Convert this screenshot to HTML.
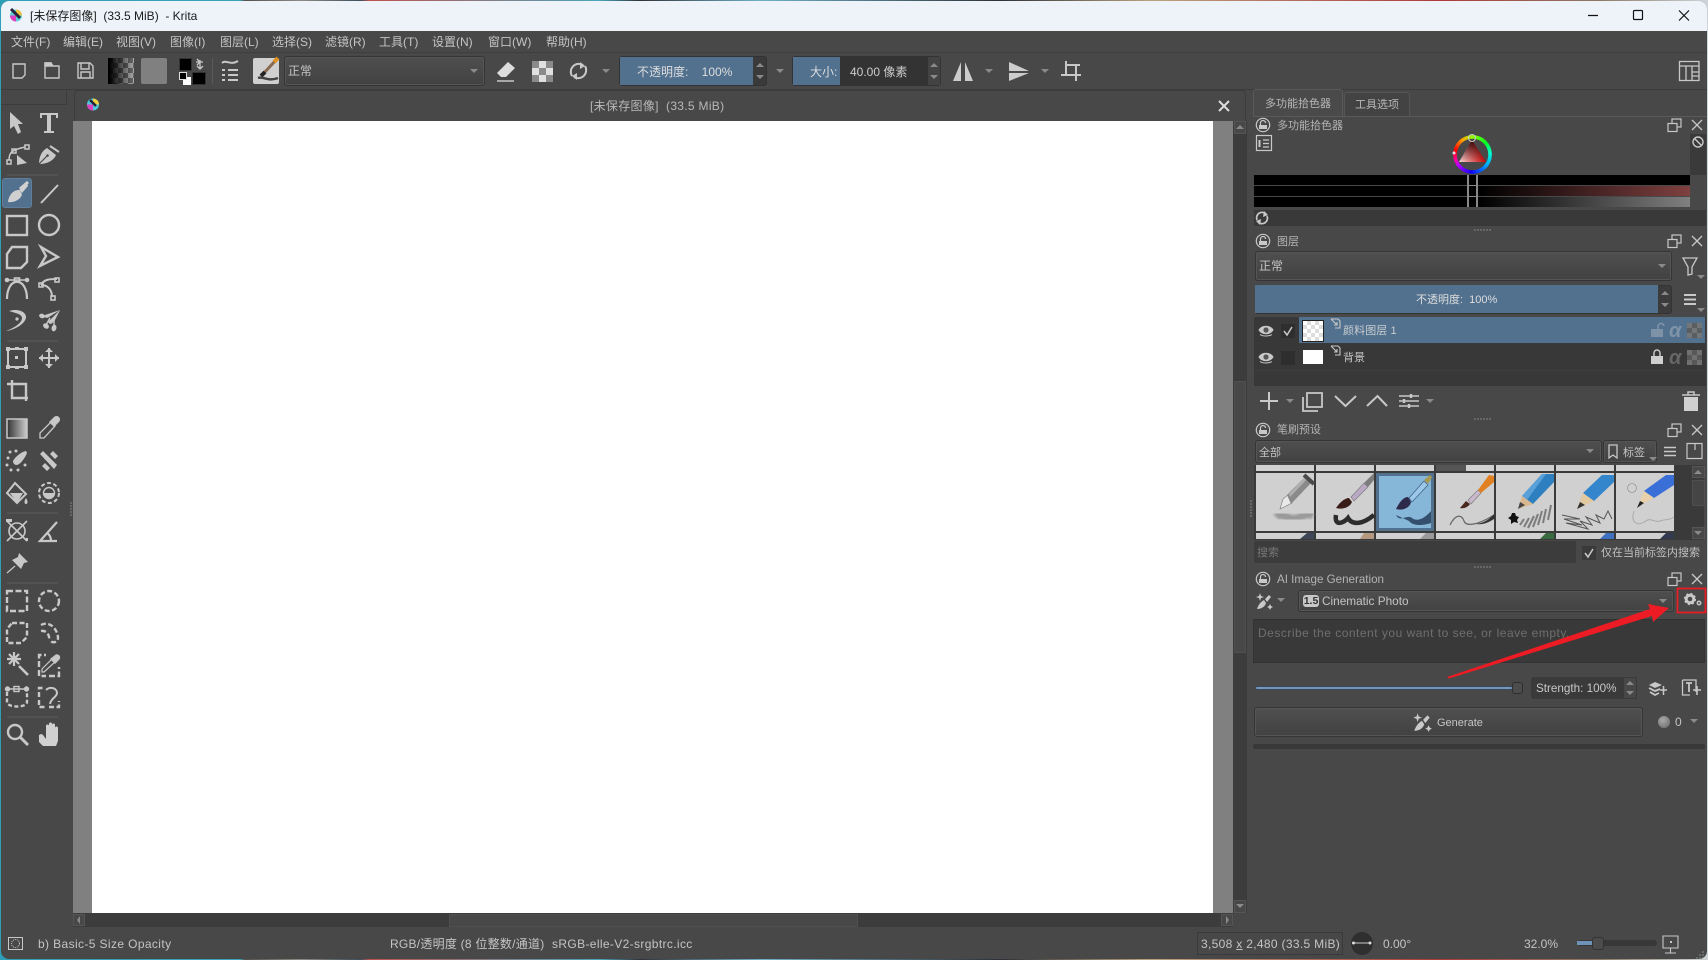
<!DOCTYPE html>
<html lang="zh-CN"><head><meta charset="utf-8"><title>Krita</title>
<style>
html,body{margin:0;padding:0;width:1708px;height:960px;overflow:hidden;background:linear-gradient(90deg,#2f9fb8 0,#3aa3ba 240px,#55504c 245px,#8d8a84 300px,#3e4f5c 360px,#c0524e 370px,#4aa5bb 600px,#30333a 640px,#6fb0c6 760px,#2e3138 1000px,#b9a27e 1150px,#b03a38 1440px,#8c7a66 1600px,#cdd4d8 1708px)}
#w{position:absolute;left:0;top:0;width:1708px;height:960px;background:#484848;clip-path:inset(1px 1px 1px 1px round 8px);font-family:"Liberation Sans","Noto Sans CJK SC",sans-serif;font-size:12px;color:#c4c4c4}
#w div{position:absolute;box-sizing:border-box}
.t{white-space:pre;line-height:16px;height:16px}
.s{font-size:11px;margin-top:1px}
.cb{background:linear-gradient(#4f4f4f,#424242);border:1px solid #353535;border-radius:3px;box-shadow:0 0 0 1px #555 inset}
svg{position:absolute;left:0;top:0}
</style></head><body>
<div id="w">
<div style="left:0;top:0;width:1708px;height:31px;background:#eef3fa"></div>
<div class="t" style="left:30px;top:8px;color:#1a1a1a;font-size:12px">[未保存图像]  (33.5 MiB)  - Krita</div>

<div class="t" style="left:11px;top:34px">文件(F)</div><div class="t" style="left:63px;top:34px">编辑(E)</div><div class="t" style="left:116px;top:34px">视图(V)</div><div class="t" style="left:170px;top:34px">图像(I)</div><div class="t" style="left:220px;top:34px">图层(L)</div><div class="t" style="left:272px;top:34px">选择(S)</div><div class="t" style="left:325px;top:34px">滤镜(R)</div><div class="t" style="left:379px;top:34px">工具(T)</div><div class="t" style="left:432px;top:34px">设置(N)</div><div class="t" style="left:488px;top:34px">窗口(W)</div><div class="t" style="left:546px;top:34px">帮助(H)</div>
<div style="left:0;top:52px;width:1708px;height:1px;background:#3e3e3e"></div>
<div style="left:0;top:89px;width:1708px;height:1px;background:#3c3c3c"></div>

<div style="left:108px;top:58px;width:26px;height:26px;background:repeating-conic-gradient(#aaa 0 25%,#666 0 50%) 0 0/10px 10px"></div>
<div style="left:108px;top:58px;width:26px;height:26px;background:linear-gradient(90deg,#000 5%,rgba(0,0,0,0))"></div>
<div style="left:141px;top:58px;width:26px;height:26px;background:#808080;border-radius:2px"></div>
<div style="left:179px;top:58px;width:13px;height:13px;background:#000;border:1px solid #333"></div>
<div style="left:192px;top:72px;width:14px;height:13px;background:#000;border:1px solid #333"></div>
<div style="left:183px;top:77px;width:8px;height:8px;background:#fff"></div>
<div style="left:179px;top:72px;width:8px;height:8px;background:#000;border:1px solid #ddd"></div>
<div style="left:212px;top:58px;width:1px;height:26px;background:#5a5a5a"></div>
<div style="left:253px;top:58px;width:26px;height:26px;background:#d0d0d0;border-radius:2px"></div>
<div class="cb" style="left:284px;top:56px;width:201px;height:30px"></div>
<div class="t" style="left:288px;top:63px">正常</div>

<div style="left:619px;top:56px;width:148px;height:30px;background:#3a3a3a;border:1px solid #333;border-radius:3px"></div>
<div style="left:620px;top:57px;width:133px;height:28px;background:#52718f"></div>
<div class="t" style="left:637px;top:64px;color:#ddd">不透明度:    100%</div>
<div style="left:792px;top:56px;width:149px;height:30px;background:#333;border:1px solid #333;border-radius:3px"></div>
<div style="left:793px;top:57px;width:47px;height:28px;background:#52718f"></div>
<div style="left:928px;top:57px;width:12px;height:28px;background:#434343"></div>
<div class="t" style="left:810px;top:64px;color:#ddd">大小:</div>
<div class="t" style="left:850px;top:64px;color:#ccc">40.00 像素</div>

<!-- document area -->
<div style="left:74px;top:90px;width:1172px;height:31px;background:#484848;border:1px solid #3c3c3c;border-bottom:0;border-radius:4px 4px 0 0"></div>
<div class="t" style="left:590px;top:98px;color:#b8b8b8;letter-spacing:.3px">[未保存图像]  (33.5 MiB)</div>
<div style="left:73px;top:121px;width:1160px;height:792px;background:#808080"></div>
<div style="left:92px;top:121px;width:1121px;height:792px;background:#fff"></div>
<div style="left:1233px;top:121px;width:14px;height:792px;background:#3c3c3c"></div>
<div style="left:1234px;top:121px;width:12px;height:13px;background:#484848;border:1px solid #555"></div>
<div style="left:1234px;top:134px;width:12px;height:247px;background:#3c3c3c"></div>
<div style="left:1234px;top:381px;width:12px;height:272px;background:#484848;border:1px solid #4f4f4f"></div>
<div style="left:1234px;top:900px;width:12px;height:13px;background:#484848;border:1px solid #555"></div>
<div style="left:73px;top:913px;width:1160px;height:14px;background:#3c3c3c"></div>
<div style="left:73px;top:914px;width:12px;height:12px;background:#484848;border:1px solid #555"></div>
<div style="left:449px;top:914px;width:409px;height:13px;background:#484848;border:1px solid #4f4f4f"></div>
<div style="left:1221px;top:914px;width:12px;height:12px;background:#484848;border:1px solid #555"></div>

<!-- left dock header -->
<div style="left:1px;top:89px;width:66px;height:16px;border:1px solid #3c3c3c;border-left:0;background:#484848"></div>

<!-- right dock tabs -->
<div style="left:1253px;top:89px;width:90px;height:28px;background:#4a4a4a;border:1px solid #5a5a5a;border-bottom:0;border-radius:3px 3px 0 0"></div>
<div style="left:1344px;top:92px;width:66px;height:24px;background:#434343;border:1px solid #555;border-bottom:0;border-radius:3px 3px 0 0"></div>
<div class="t s" style="left:1265px;top:95px;color:#b8b8b8">多功能拾色器</div>
<div class="t s" style="left:1355px;top:96px;color:#b8b8b8">工具选项</div>
<div style="left:1253px;top:116px;width:454px;height:1px;background:#5a5a5a"></div>

<!-- colour selector -->
<div class="t s" style="left:1277px;top:117px;color:#b4b4b4">多功能拾色器</div>
<div style="left:1690px;top:134px;width:16px;height:41px;background:#3a3a3a"></div>
<div style="left:1452.5px;top:134.5px;width:39px;height:39px;border-radius:50%;background:conic-gradient(#90ff00 0deg,#00ff20 50deg,#00ffd0 85deg,#00a0ff 130deg,#1000ff 185deg,#c000ff 235deg,#ff0090 255deg,#ff0000 285deg,#ffa000 325deg,#90ff00 360deg);-webkit-mask:radial-gradient(circle,transparent 15.5px,#000 16px);mask:radial-gradient(circle,transparent 15.5px,#000 16px)"></div>
<div style="left:1254px;top:175px;width:436px;height:10px;background:#000"></div>
<div style="left:1254px;top:186px;width:436px;height:10px;background:linear-gradient(90deg,#000 0,#000 51.8%,#7f4040 100%)"></div>
<div style="left:1254px;top:197px;width:436px;height:10px;background:linear-gradient(90deg,#000 0,#000 51.8%,#808080 100%)"></div>
<div style="left:1467px;top:175px;width:11px;height:32px;border:1px solid #888;border-width:0 2px"></div>
<div style="left:1467px;top:185px;width:11px;height:1px;background:#888"></div>
<div style="left:1467px;top:196px;width:11px;height:1px;background:#888"></div>
<div style="left:1254px;top:210px;width:452px;height:16px;background:#393939"></div>

<!-- layers -->
<div class="t s" style="left:1277px;top:233px;color:#b4b4b4">图层</div>
<div class="cb" style="left:1255px;top:251px;width:417px;height:30px"></div>
<div class="t" style="left:1259px;top:258px">正常</div>
<div style="left:1255px;top:285px;width:417px;height:29px;background:#3c3c3c;border:1px solid #333;border-radius:3px"></div>
<div style="left:1255px;top:285px;width:403px;height:28px;background:#52718f"></div>
<div class="t s" style="left:1416px;top:291px;color:#ddd">不透明度:  100%</div>
<div style="left:1254px;top:317px;width:452px;height:69px;background:#383838"></div>
<div style="left:1299px;top:317px;width:406px;height:26px;background:#52718f"></div>
<div style="left:1281px;top:324px;width:14px;height:14px;background:#2e2e2e"></div>
<div style="left:1281px;top:351px;width:14px;height:14px;background:#2e2e2e"></div>
<div style="left:1302px;top:320px;width:22px;height:22px;border:1px solid #222;background:repeating-conic-gradient(#ddd 0 25%,#fff 0 50%) 0 0/8px 8px"></div>
<div style="left:1303px;top:350px;width:20px;height:14px;background:#fff"></div>
<div class="t s" style="left:1343px;top:322px;color:#c8ccd0;letter-spacing:.1px">颜料图层 1</div>
<div class="t s" style="left:1343px;top:349px;color:#c4c4c4">背景</div>
<div style="left:1254px;top:370px;width:452px;height:1px;background:#3e3e3e"></div>

<!-- brush presets -->
<div class="t s" style="left:1277px;top:421px;color:#b4b4b4">笔刷预设</div>
<div class="cb" style="left:1255px;top:440px;width:347px;height:23px"></div>
<div class="t s" style="left:1259px;top:444px">全部</div>
<div class="cb" style="left:1603px;top:440px;width:54px;height:23px"></div>
<div class="t s" style="left:1623px;top:444px">标签</div>
<div style="left:1254px;top:465px;width:450px;height:75px;background:#3a3a3a"></div>
<div style="left:1692px;top:466px;width:13px;height:12px;background:#484848;border:1px solid #555"></div>
<div style="left:1692px;top:480px;width:13px;height:26px;background:#454545;border:1px solid #4f4f4f"></div>
<div style="left:1692px;top:527px;width:13px;height:12px;background:#484848;border:1px solid #555"></div>
<div style="left:1254px;top:541px;width:322px;height:22px;background:#3c3c3c;border-radius:2px"></div>
<div class="t s" style="left:1257px;top:544px;color:#777">搜索</div>
<div style="left:1582px;top:546px;width:14px;height:14px;background:#3a3a3a"></div>
<div class="t s" style="left:1601px;top:544px;color:#c0c0c0">仅在当前标签内搜索</div>

<!-- AI image generation -->
<div class="t" style="left:1277px;top:572px;color:#b4b4b4;font-size:11.6px">AI Image Generation</div>
<div class="cb" style="left:1298px;top:590px;width:376px;height:22px"></div>
<div style="left:1303px;top:595px;width:16px;height:12px;background:#c8c8c8;border-radius:3px;color:#333;font-size:10.5px;font-weight:bold;line-height:12px;text-align:center">1.5</div>
<div class="t" style="left:1322px;top:593px;font-size:11.8px">Cinematic Photo</div>
<div style="left:1253px;top:619px;width:452px;height:44px;background:#393939;border:1px solid #333"></div>
<div class="t" style="left:1258px;top:625px;color:#6f6f6f;letter-spacing:.5px">Describe the content you want to see, or leave empty.</div>
<div style="left:1255px;top:686px;width:258px;height:4px;background:#7096bb;border:1px solid #3a4a58;border-radius:2px"></div>
<div style="left:1512px;top:682px;width:11px;height:12px;background:#4c4c4c;border:1px solid #2e2e2e;border-radius:3px"></div>
<div style="left:1531px;top:677px;width:106px;height:22px;background:#3a3a3a;border-radius:3px"></div>
<div style="left:1623px;top:677px;width:14px;height:22px;background:#484848;border:1px solid #3a3a3a"></div>
<div class="t" style="left:1536px;top:681px;color:#c8c8c8;font-size:11.7px">Strength: 100%</div>
<div class="cb" style="left:1254px;top:707px;width:389px;height:30px"></div>
<div class="t s" style="left:1437px;top:714px">Generate</div>
<div style="left:1658px;top:716px;width:12px;height:12px;border-radius:50%;background:radial-gradient(circle at 40% 35%,#aaa,#666)"></div>
<div class="t" style="left:1675px;top:714px">0</div>
<div style="left:1253px;top:744px;width:452px;height:5px;background:#383838;border-radius:2px"></div>

<!-- status bar -->
<div class="t" style="left:38px;top:936px;letter-spacing:.38px">b) Basic-5 Size Opacity</div>
<div class="t" style="left:390px;top:936px;letter-spacing:.25px">RGB/透明度 (8 位整数/通道)</div>
<div class="t" style="left:552px;top:936px;letter-spacing:.36px">sRGB-elle-V2-srgbtrc.icc</div>
<div style="left:1197px;top:932px;width:146px;height:23px;border:1px solid #3a3a3a"></div>
<div class="t" style="left:1201px;top:936px;letter-spacing:.32px">3,508 <u>x</u> 2,480 (33.5 MiB)</div>
<div style="left:1351px;top:932px;width:22px;height:23px;border-radius:50%;background:#2f2f2f"></div>
<div class="t" style="left:1383px;top:936px">0.00°</div>
<div class="t" style="left:1524px;top:936px">32.0%</div>
<div style="left:1577px;top:940px;width:80px;height:6px;background:#383838;border-radius:3px"></div>
<div style="left:1577px;top:941px;width:20px;height:4px;background:#6d93b8"></div>
<div style="left:1592px;top:937px;width:12px;height:13px;background:#4c4c4c;border:1px solid #333;border-radius:3px"></div>

<!-- selected tool -->
<div style="left:2px;top:178px;width:30px;height:30px;background:#52718f;border:1px solid #607f9d;border-radius:3px"></div>

<svg width="1708" height="960" viewBox="0 0 1708 960" fill="none" stroke="#c8c8c8" stroke-width="2">
<defs>
<g id="lock"><circle r="6.7" stroke-width="1.2"/><path d="M-4,0H4V4H-4Z" fill="#c8c8c8" stroke="none"/><path d="M-2.5,0V-2A2.5,2.5 0 0 1 2.5,-2" stroke-width="1.2"/></g>
<g id="flt" stroke-width="1.2"><rect x="4" y="0" width="9" height="8"/><rect x="0" y="4.5" width="9" height="8" fill="#484848"/></g>
<path id="xx" d="M-5,-5L5,5M5,-5L-5,5" stroke-width="1.3"/>
<path id="ar" d="M-4,-2H4L0,2Z" fill="#8a8a8a" stroke="none"/>
<path id="up" d="M-4,2H4L0,-2Z" fill="#8a8a8a" stroke="none"/>
<g id="eye"><path d="M-7,0C-4,-5 4,-5 7,0C4,5 -4,5 -7,0Z" stroke-width="1" fill="#c8c8c8"/><circle r="2.6" fill="#555" stroke="none"/><path d="M-6,4.5C-3,6.5 3,6.5 6,4.5" stroke-width="1"/></g>
<g id="li" stroke-width="1.1"><path d="M0,0H7L9,2V9H4"/><path d="M0,0L6,6M6,3V6H3"/></g>
<g id="inh"><path d="M0,0h5v5h-5zM10,0h5v5h-5zM5,5h5v5h-5zM0,10h5v5h-5zM10,10h5v5h-5z" fill="#777" stroke="none"/><path d="M5,0h5v5h-5zM0,5h5v5h-5zM10,5h5v5h-5zM5,10h5v5h-5z" fill="#5c5c5c" stroke="none"/></g>
<g id="wandi" fill="#c8c8c8" stroke="none"><path d="M1,-2L5,-6L7,-4L3,1ZM0,-1L2,2C1,6 -3,8 -7,8C-6,5 -4,1 0,-1Z"/><path d="M-4,-8L-3,-5L0,-4L-3,-3L-4,0L-5,-3L-8,-4L-5,-5ZM6,3L7,5L9,6L7,7L6,9L5,7L3,6L5,5Z"/></g>
<linearGradient id="gr" x1="0" x2="1"><stop offset="0" stop-color="#333"/><stop offset="1" stop-color="#ccc"/></linearGradient>
<linearGradient id="tr1" x1="0" x2="1"><stop offset="0" stop-color="#f8dcdc"/><stop offset="1" stop-color="#d00000"/></linearGradient>
<linearGradient id="tr2" x1="0" x2="0" y1="0" y2="1"><stop offset="0" stop-color="#300"/><stop offset="1" stop-color="#300" stop-opacity="0"/></linearGradient>
<filter id="bl"><feGaussianBlur stdDeviation="1.2"/></filter>
<filter id="bs"><feGaussianBlur stdDeviation=".35"/></filter>
</defs>

<!-- title bar -->
<circle cx="16" cy="15.5" r="6" fill="#5bd0d8" stroke="none"/><path d="M16,9.5A6,6 0 0 1 22,15.5L16,15.5Z" fill="#f0c040" stroke="none"/><path d="M10,15.5A6,6 0 0 0 16,21.5L16,15.5Z" fill="#e040c0" stroke="none"/><path d="M11,9L20,18" stroke="#23233a" stroke-width="3"/>
<g stroke="#111" stroke-width="1.2"><path d="M1588,15.5H1598"/><rect x="1633.5" y="10.5" width="9" height="9" rx="1"/><path d="M1679,10.5L1689,20.5M1689,10.5L1679,20.5"/></g>
<circle cx="93" cy="104.5" r="6" fill="#4fc8dd" stroke="none"/><path d="M93,98.5A6,6 0 0 1 99,104.5L93,104.5Z" fill="#f0d040" stroke="none"/><path d="M87,104.5A6,6 0 0 0 93,110.5L93,104.5Z" fill="#e040c0" stroke="none"/><path d="M90,100L96,106" stroke="#23233a" stroke-width="2.5"/>
<path d="M1219,101L1229,111M1229,101L1219,111" stroke="#ddd" stroke-width="2"/>

<!-- top toolbar -->
<g stroke-width="1.4"><path d="M13,64H25V75L22,78H13Z"/><path d="M45,66H59V78H45ZM45,66V63H51L53,66"/><path d="M45,66V63H51V66" fill="#c8c8c8"/><path d="M78,63H90L93,66V78H78ZM81,63V69H89V63M81,78V72H90V78"/></g>
<g><path d="M196,62H203M200,62L197,65M200,62L197,59" stroke-width="1.3"/><path d="M200,60V68M197,66L200,69L203,66" stroke-width="1.3"/></g>
<g stroke-width="2"><path d="M222,63C226,59 230,66 238,61"/><path d="M222,70H225M228,70H238M222,75H225M228,75H238M222,80H225M228,80H238"/></g>
<path d="M276,60L264,73" stroke="#8a6a50" stroke-width="3"/><path d="M278,58L274,62" stroke="#e09020" stroke-width="4"/><path d="M265,72L261,76" stroke="#222" stroke-width="4"/><path d="M258,78C263,76 268,82 278,78" stroke="#444" stroke-width="2.5"/>
<use href="#ar" x="474" y="71"/>
<path d="M497,73L508,62L515,68L506,77H501Z" fill="#ddd" stroke="none"/><path d="M497,81H514" stroke-width="1.5"/>
<g stroke="none"><rect x="532" y="61" width="21" height="21" fill="#e0e0e0"/><path d="M532,61h7v7h-7zM546,61h7v7h-7zM539,68h7v7h-7zM532,75h7v7h-7zM546,75h7v7h-7z" fill="#8a8a8a"/></g>
<path d="M572,76A8,8 0 0 1 583,65M585,66A8,8 0 0 1 574,77" stroke-width="2"/><path d="M580,62L585,66L580,69ZM577,80L572,76L577,73Z" fill="#c8c8c8" stroke="none"/>
<use href="#ar" x="606" y="71"/>
<use href="#up" x="760" y="65"/><use href="#ar" x="760" y="77"/>
<use href="#ar" x="780" y="71"/>
<use href="#up" x="934" y="65"/><use href="#ar" x="934" y="77"/>
<path d="M953,81L961,62V81ZM965,81V62L973,81Z" fill="#ccc" stroke="none"/>
<use href="#ar" x="989" y="71"/>
<path d="M1009,62L1029,71H1009ZM1009,73H1029L1009,81Z" fill="#ccc" stroke="none"/>
<use href="#ar" x="1045" y="71"/>
<path d="M1061,75H1081M1066,61V75M1066,65H1080M1076,65V81" stroke-width="2"/>
<g stroke-width="1.3"><path d="M1679.5,61.5H1699V80.5H1679.5ZM1679.5,66H1699M1686,66V80.5M1692,66V80.5M1692,72H1699M1692,76H1699"/></g>

<!-- left tools -->
<g fill="#c8c8c8" stroke="none"><path d="M10,112L23,124H18L21,132L18,134L14,126L10,129Z"/><path d="M40,113H58V118H56V115H51V131H54V133H44V131H47V115H42V118H40Z"/></g>
<g stroke-width="1.5"><rect x="7" y="160" width="4" height="4"/><rect x="12" y="149" width="4" height="4"/><rect x="25" y="145" width="4" height="4"/><path d="M9,160C9,152 12,150 25,147"/></g><path d="M17,155L27,163L17,165Z" fill="#c8c8c8" stroke="none"/>
<path d="M39,164C39,156 42,151 47,148L56,155C54,160 48,164 39,164Z" fill="#c8c8c8" stroke="none"/><path d="M39,164L47,156" stroke="#484848" stroke-width="1.2"/><circle cx="47.500" cy="155.500" r="1.300" fill="#484848" stroke="none"/><path d="M50,146L59,152" stroke-width="2"/>
<path d="M19,190L27,183L28,186L22,193ZM8,202C9,195 13,190 19,190L22,194C21,200 13,203 8,202Z" fill="#d0d0d0" stroke="none"/><path d="M20,189L28,182" stroke="#d0d0d0" stroke-width="3"/>
<path d="M41,203L58,185" stroke-width="2"/>
<rect x="7" y="216" width="20" height="19" stroke-width="2.4"/><circle cx="49" cy="225" r="10" stroke-width="2.4"/>
<path d="M12,247H27V262L21,268H7V254Z" stroke-width="2.4"/><path d="M41,247L58,257L40,266L46,256Z" stroke-width="2.4"/>
<g stroke-width="1.6"><path d="M7,299C7,276 27,276 27,299" stroke-width="2.2"/><rect x="14.500" y="278" width="5" height="4"/><path d="M7,280H27"/><circle cx="7" cy="280" r="1.500" fill="#c8c8c8"/><circle cx="27" cy="280" r="1.500" fill="#c8c8c8"/><path d="M41,285C48,285 52,290 52,297M41,285C44,279 50,279 57,279" stroke-width="2"/><rect x="39" y="283" width="4" height="4"/><rect x="55" y="278" width="4" height="4"/><rect x="51" y="296" width="4" height="4"/></g>
<path d="M9,311C18,308 27,312 26,318C24,325 14,330 6,331C14,328 22,323 22,318C22,314 15,313 9,311Z" fill="#c8c8c8" stroke="none"/><circle cx="17" cy="319" r="1.6" fill="#c8c8c8" stroke="none"/>
<g fill="#c8c8c8" stroke="none"><path d="M60,310L45,315C43,317 47,319 49,317Z"/><path d="M60,310L49,321C47,324 52,325 53,322Z"/><path d="M60,310L56,318L54,322L51,320Z"/><ellipse cx="42" cy="316" rx="3" ry="2.200" transform="rotate(20 42 316)"/><ellipse cx="46" cy="326" rx="3.200" ry="2.500" transform="rotate(40 46 326)"/><ellipse cx="54" cy="328" rx="2.400" ry="3.400" transform="rotate(15 54 328)"/><path d="M50,318L46,325M54,320L54,326M47,316L43,316" stroke="#c8c8c8" stroke-width="1.400"/></g>
<rect x="8" y="349" width="18" height="18" stroke-width="2"/><g fill="#c8c8c8" stroke="none"><rect x="6" y="347" width="4" height="4"/><rect x="24" y="347" width="4" height="4"/><rect x="6" y="365" width="4" height="4"/><rect x="24" y="365" width="4" height="4"/><rect x="15" y="356" width="3" height="3"/><rect x="15" y="347" width="4" height="3"/><rect x="15" y="366" width="4" height="3"/></g>
<path d="M39,358H59M49,348V368" stroke-width="2"/><path d="M39,358L43,354V362ZM59,358L55,354V362ZM49,348L45,352H53ZM49,368L45,364H53Z" fill="#c8c8c8" stroke="none"/>
<path d="M7,384H26V401M12,380V398H28" stroke-width="2.4"/>
<rect x="7" y="419" width="20" height="19" fill="url(#gr)" stroke-width="1.5"/>
<path d="M40,438L40,433L51,422L55,426L44,438Z" stroke-width="1.3"/><path d="M49,422L54,427L59,422A3.5,3.5 0 0 0 54,417Z" fill="#c8c8c8" stroke="none"/>
<g fill="#c8c8c8" stroke="none"><path d="M13,461C15,457 21,452 26,451L27,453C25,458 21,463 19,464C17,466 13,465 13,461Z"/><circle cx="8" cy="458" r="1.500"/><circle cx="10" cy="452" r="1.500"/><circle cx="16" cy="451" r="1.500"/><circle cx="7" cy="465" r="1.500"/><circle cx="11" cy="470" r="1.500"/><circle cx="18" cy="470" r="1.500"/><circle cx="25" cy="465" r="1.500"/><path d="M40,454L43,451L57,465L54,469Z"/><path d="M53,451L58,456L55,459L50,454ZM45,463L50,468L47,471L42,466Z"/></g>
<path d="M15,483L7,493L17,503L26,494Z" stroke-width="2"/><path d="M10,493H23L17,503Z" fill="#c8c8c8" stroke="none"/><path d="M26,498C28,501 28,504 26,504C24,504 24,501 26,498Z" fill="#c8c8c8" stroke="none"/>
<circle cx="49" cy="493" r="10" stroke-dasharray="4 2.4" stroke-width="2"/><circle cx="49" cy="493" r="5.5" stroke-width="1.4"/><path d="M43.5,493H54.5A5.5,5.5 0 0 1 43.5,493Z" fill="#c8c8c8" stroke="none"/>
<path d="M7,521L27,541M27,521L7,541" stroke-width="1.6"/><circle cx="17" cy="531" r="8" stroke-width="1.6"/><path d="M7,521h4v-1H7ZM27,541v-3" stroke-width="2"/>
<path d="M57,522L40,541H57M47,533C50,535 51,538 51,541" stroke-width="2.2"/>
<path d="M15,566L7,573" stroke-width="1.2"/><path d="M19,553L28,562L24,563L21,569L12,560L18,557Z" fill="#c8c8c8" stroke="none"/>
<g stroke-dasharray="5 2.5" stroke-width="2.4"><rect x="7" y="591" width="20" height="20" stroke-dasharray="6 2.5"/><circle cx="49" cy="601" r="10"/><path d="M12,623H27V637L21,643H7V629Z"/><path d="M41,625C50,620 58,630 58,638C58,643 52,643 51,641M41,631C47,630 50,636 49,640"/></g>
<path d="M19,666L28,675" stroke-width="2.6"/><path d="M7,659H21M14,652V666M9,654L19,664M19,654L9,664" stroke-width="2.2"/>
<g stroke-width="2.4"><path d="M39,667V655H46M39,670V676H46M49,676H59V667" stroke-dasharray="6 2.5"/></g><path d="M44,672L42,672V669L52,659L55,662Z" stroke-width="1.2"/><path d="M50,659L55,664L59,660A3,3 0 0 0 55,655Z" fill="#c8c8c8" stroke="none"/>
<path d="M7,692V702C7,708 27,708 27,702V692" stroke-width="2.4" stroke-dasharray="4 2.4"/><path d="M8,689H26" stroke-width="1.5"/><rect x="14" y="686.5" width="5" height="5" stroke-width="1.4"/><circle cx="7.5" cy="689" r="1.7" fill="#c8c8c8"/><circle cx="26.5" cy="689" r="1.7" fill="#c8c8c8"/>
<path d="M39,697V688H45M39,700V707H45M49,707H59V701" stroke-width="2.4" stroke-dasharray="5 2.5"/><path d="M46,690C50,686 57,688 57,693C57,697 51,698 50,704" stroke-width="2"/>
<circle cx="15" cy="732" r="7" stroke-width="2.4"/><path d="M20,737L28,745" stroke-width="3"/>
<path d="M39,737V742L43,746H56L58,741V728A1.5,1.500 0 0 0 55,728V735V725A1.500,1.500 0 0 0 52,725V735V724A1.500,1.500 0 0 0 49,724V735V726A1.500,1.500 0 0 0 46,726V739L43,735C41,733 38,735 39,737Z" fill="#d0d0d0" stroke="none"/>
<g stroke="#5c5c5c" stroke-width="1"><path d="M7,175H58M7,341H58M7,513H58M7,583H58M7,717H58"/></g>
<g fill="#666" stroke="none"><rect x="70" y="502" width="2" height="2"/><rect x="70" y="505" width="2" height="2"/><rect x="70" y="508" width="2" height="2"/><rect x="70" y="511" width="2" height="2"/><rect x="70" y="514" width="2" height="2"/></g>

<!-- scroll arrows -->
<use href="#up" x="1240" y="127"/><use href="#ar" x="1240" y="906"/>
<path d="M80,916V924L77,920Z" fill="#8a8a8a" stroke="none"/><path d="M1226,916V924L1229,920Z" fill="#8a8a8a" stroke="none"/>

<!-- docker headers -->
<use href="#lock" x="1263" y="125"/><use href="#flt" x="1668" y="119"/><use href="#xx" x="1697" y="125"/>
<use href="#lock" x="1263" y="241"/><use href="#flt" x="1668" y="235"/><use href="#xx" x="1697" y="241"/>
<use href="#lock" x="1263" y="430"/><use href="#flt" x="1668" y="424"/><use href="#xx" x="1697" y="430"/>
<use href="#lock" x="1263" y="579"/><use href="#flt" x="1668" y="573"/><use href="#xx" x="1697" y="579"/>

<!-- colour selector icons -->
<g stroke-width="1.2"><rect x="1256.5" y="135.5" width="15" height="15"/><path d="M1259.5,140V147" stroke-width="2"/><path d="M1263,140H1269M1263,143.5H1269M1263,147H1269"/></g>
<circle cx="1698" cy="142" r="5" stroke-width="1.4"/><path d="M1694.5,138.5L1701.5,145.5" stroke-width="1.4"/>
<polygon points="1472,140 1459,162 1486,162" fill="url(#tr1)" stroke="none"/><polygon points="1472,140 1459,162 1486,162" fill="url(#tr2)" stroke="none"/>
<circle cx="1472" cy="138" r="3.5" fill="none" stroke="#ccc" stroke-width="1"/><circle cx="1454" cy="153" r="1.5" fill="#ddd" stroke="none"/>
<path d="M1257,220A5.5,5.5 0 0 1 1266,214M1267,216A5.5,5.5 0 0 1 1258,222" stroke-width="1.7"/><path d="M1264,211L1268,215L1263,217ZM1260,225L1256,221L1261,219Z" fill="#c8c8c8" stroke="none"/>
<g fill="#666" stroke="none"><path d="M1474,229h2v2h-2zM1477,229h2v2h-2zM1480,229h2v2h-2zM1483,229h2v2h-2zM1486,229h2v2h-2zM1489,229h2v2h-2zM1474,418h2v2h-2zM1477,418h2v2h-2zM1480,418h2v2h-2zM1483,418h2v2h-2zM1486,418h2v2h-2zM1489,418h2v2h-2zM1474,566h2v2h-2zM1477,566h2v2h-2zM1480,566h2v2h-2zM1483,566h2v2h-2zM1486,566h2v2h-2zM1489,566h2v2h-2zM1250,500h2v2h-2zM1250,503h2v2h-2zM1250,506h2v2h-2zM1250,509h2v2h-2zM1250,512h2v2h-2zM1250,515h2v2h-2z"/></g>

<!-- layers icons -->
<use href="#ar" x="1662" y="266"/>
<path d="M1683,258H1697L1692,267V274L1688,275V267Z" stroke-width="1.3"/><use href="#ar" x="1701" y="277"/>
<use href="#up" x="1665" y="293"/><use href="#ar" x="1665" y="305"/>
<path d="M1684,295H1696M1684,299.500H1696M1684,304H1696" stroke-width="2"/><use href="#ar" x="1701" y="310"/>
<use href="#eye" x="1266" y="330"/><use href="#eye" x="1266" y="357"/>
<path d="M1284,331L1287,335L1292,327" stroke-width="1.5"/>
<use href="#li" x="1331" y="319"/><use href="#li" x="1331" y="346"/>
<path d="M1651,329H1663V337H1651Z" fill="#7e93a8" stroke="none"/><path d="M1658,329V327A3,3 0 0 1 1664,326" stroke="#7e93a8" stroke-width="1.500"/>
<path d="M1651,356H1663V364H1651Z" fill="#d0d0d0" stroke="none"/><path d="M1654,356V353A3,3 0 0 1 1660,353V356" stroke-width="1.5"/>
<text x="1669" y="337" font-family="Liberation Sans" font-size="20" font-style="italic" font-weight="bold" fill="#7e93a8" stroke="none">α</text>
<text x="1669" y="364" font-family="Liberation Sans" font-size="20" font-style="italic" font-weight="bold" fill="#666" stroke="none">α</text>
<g opacity=".9"><use href="#inh" x="1687" y="323"/><use href="#inh" x="1687" y="350"/></g>
<path d="M1260,401H1278M1269,392V410" stroke-width="2"/><use href="#ar" x="1290" y="401"/>
<path d="M1307,393H1322V407H1307ZM1303,397V411H1318" stroke-width="1.8"/>
<path d="M1335,396L1345.500,406L1356,396M1367,406L1377.500,396L1387,406" stroke-width="2"/>
<path d="M1399,396H1419M1399,401H1419M1399,406H1419" stroke-width="1.6"/><path d="M1411,394v4M1404,399v4M1409,404v4" stroke-width="2.4"/><use href="#ar" x="1430" y="401"/>
<path d="M1682,395H1700M1688,395V392H1694V395" stroke-width="1.5"/><path d="M1684,397H1698V411H1684Z" fill="#d0d0d0" stroke="none"/>

<!-- brush preset icons -->
<use href="#ar" x="1590" y="451"/><path d="M1609,445H1617V458L1613,455L1609,458Z" stroke-width="1.3"/><use href="#ar" x="1653" y="459"/>
<path d="M1664,447.500H1676M1664,451.500H1676M1664,455.500H1676" stroke-width="1.6"/>
<path d="M1687,443.500H1702V458.500H1687ZM1695,444V450" stroke-width="1.2"/>
<use href="#up" x="1698" y="472"/><use href="#ar" x="1698" y="533"/>
<path d="M1585,553L1588,557L1593,549" stroke-width="1.6"/>

<!-- preset partial rows -->
<g stroke="none">
<rect x="1256" y="465" width="58" height="6" fill="#d0d0d0"/><rect x="1316" y="465" width="58" height="6" fill="#d0d0d0"/><rect x="1376" y="465" width="58" height="6" fill="#d0d0d0"/><rect x="1436" y="465" width="58" height="6" fill="#555"/><rect x="1466" y="465" width="28" height="6" fill="#d0d0d0"/><rect x="1496" y="465" width="58" height="6" fill="#d0d0d0"/><rect x="1556" y="465" width="58" height="6" fill="#d0d0d0"/><rect x="1616" y="465" width="58" height="6" fill="#d0d0d0"/>
<rect x="1256" y="533" width="58" height="6" fill="#d0d0d0"/><rect x="1316" y="533" width="58" height="6" fill="#d0d0d0"/><rect x="1376" y="533" width="58" height="6" fill="#d0d0d0"/><rect x="1436" y="533" width="58" height="6" fill="#d0d0d0"/><rect x="1496" y="533" width="58" height="6" fill="#d0d0d0"/><rect x="1556" y="533" width="58" height="6" fill="#d0d0d0"/><rect x="1616" y="533" width="58" height="6" fill="#d0d0d0"/>
<path d="M1300,539L1307,533H1314V539Z" fill="#3e4658"/><path d="M1360,539L1364,533H1374V539Z" fill="#b49880"/><path d="M1420,539L1426,533H1434V539Z" fill="#999"/><path d="M1540,539L1546,533H1554V539Z" fill="#3a6a40"/><path d="M1600,539L1606,533H1614V539Z" fill="#4070c0"/><path d="M1660,539L1666,533H1674V539Z" fill="#333a50"/>
</g>
<!-- preset thumbs -->
<g transform="translate(1256,473)"><rect width="58" height="58" fill="#d0d0d0" stroke="none"/><path d="M20,44C26,38 33,49 42,45S52,40 57,43" stroke="#888" stroke-width="8" opacity=".75" filter="url(#bl)"/><path d="M24,36L27,26L33,21L36,30Z" fill="#e8e8e8" stroke="#777" stroke-width=".6"/><path d="M31,22L50,3L56,9L35,31Z" fill="#8a8a8a" stroke="none"/><path d="M33,21L50,3L52,5L34,24Z" fill="#b0b0b0" stroke="none"/><path d="M48,2L58,11" stroke="#4a4a4a" stroke-width="4"/></g>
<g transform="translate(1316,473)"><rect width="58" height="58" fill="#d0d0d0" stroke="none"/><path d="M20,42C18,54 28,50 32,45C36,52 46,52 58,42" stroke="#2c2c2c" stroke-width="4.500"/><path d="M20,35C24,29 29,25 33,25L36,29C34,34 27,37 20,35Z" fill="#3a1d18" stroke="none"/><path d="M35,24L48,10L52,14L38,28Z" fill="#b9a9c4" stroke="#777" stroke-width=".6"/><path d="M48,10L58,0V7L52,14Z" fill="#7c7c7c" stroke="none"/></g>
<g transform="translate(1376,473)"><rect width="58" height="58" fill="#52718f" stroke="none"/><rect x="3" y="3" width="52" height="52" fill="#86b7d8" stroke="none"/><path d="M20,42C24,50 31,41 36,45C41,49 48,46 55,38V50C46,53 37,53 33,48" fill="#35506e" stroke="none" filter="url(#bs)"/><path d="M20,36C24,28 28,24 32,24L35,29C34,35 26,38 20,36Z" fill="#2e2a4c" stroke="none"/><path d="M33,25L48,8L52,12L36,29Z" fill="#9cc8e8" stroke="#3a5a80" stroke-width=".7"/><path d="M48,7L54,2L56,4L52,11Z" fill="#a89a50" stroke="none"/></g>
<g transform="translate(1436,473)"><rect width="58" height="58" fill="#d0d0d0" stroke="none"/><path d="M14,52C20,40 26,42 28,48C30,54 42,52 58,42" stroke="#666" stroke-width="1.200"/><path d="M40,51C48,50 54,46 58,41V46C52,50 46,52 40,51Z" fill="#333" stroke="none"/><path d="M24,35L30,28L34,31C32,34 28,36 24,35Z" fill="#4a2820" stroke="none"/><path d="M32,27L42,17L45,20L35,31Z" fill="#c9b8cc" stroke="#777" stroke-width=".6"/><path d="M42,17L53,2L58,3V9L45,20Z" fill="#e08020" stroke="none"/></g>
<g transform="translate(1496,473)"><rect width="58" height="58" fill="#d0d0d0" stroke="none"/><path d="M26,23L46,1H58V9L37,31Z" fill="#2e7fbf" stroke="none"/><path d="M26,23L46,1H50L31,27Z" fill="#5aa0d8" stroke="none"/><path d="M22,36L26,23L37,31Z" fill="#d8b890" stroke="none"/><path d="M22,36L24,29L29,32Z" fill="#444" stroke="none"/><path d="M16,40l3,0 1,3 3,1-2,3 1,3-4-1-3,2v-4l-3-2 3-2Z" fill="#111" stroke="none"/><path d="M24,52L28,46M28,54L33,45M32,55L38,43M37,54L42,41M42,52L46,38M47,50L50,36M52,47L55,32" stroke="#7c7c7c" stroke-width="2" filter="url(#bs)"/></g>
<g transform="translate(1556,473)"><rect width="58" height="58" fill="#d0d0d0" stroke="none"/><path d="M27,20L46,2H58V9L38,28Z" fill="#3385cc" stroke="none"/><path d="M21,36L27,20L38,28Z" fill="#e0c8a0" stroke="none"/><path d="M21,36L24,29L29,32Z" fill="#333" stroke="none"/><path d="M6,42L24,46L8,46L26,52L10,50L32,56L24,48L36,52L30,44L44,50L40,42L48,46L52,38L56,46" stroke="#555" stroke-width="1"/></g>
<g transform="translate(1616,473)"><rect width="58" height="58" fill="#d0d0d0" stroke="none"/><circle cx="16" cy="15" r="4.500" stroke="#999" stroke-width=".8"/><path d="M28,18L50,2H58V12L38,25Z" fill="#3a6fd8" stroke="none"/><path d="M22,33L28,18L38,25Z" fill="#e8d0a8" stroke="none"/><path d="M21,35L24,28L28,30Z" fill="#222" stroke="none"/><path d="M18,38C14,50 22,54 30,48C34,44 38,50 44,48C48,46 52,48 58,44" stroke="#aaa" stroke-width="1"/></g>

<!-- AI icons -->
<use href="#wandi" x="1264" y="601"/><use href="#ar" x="1281" y="600"/><use href="#ar" x="1663" y="601"/>
<circle cx="1690" cy="599" r="3.800" stroke-width="3" fill="none"/><circle cx="1690" cy="599" r="5.300" stroke-width="1.600" stroke-dasharray="2 2.200"/><circle cx="1699" cy="603" r="1.700" stroke-width="1.500"/>
<rect x="1677.500" y="588.500" width="28" height="24" stroke="#e81c24" stroke-width="1.800"/>
<use href="#up" x="1630" y="683"/><use href="#ar" x="1630" y="693"/>
<path d="M1655,682L1662,685L1655,688L1649,685Z" fill="#c8c8c8" stroke="none"/><path d="M1649,688L1655,691L1660,689M1650,692L1655,695L1659,693" stroke-width="1.800"/><path d="M1660,690H1667M1663.500,686V695" stroke-width="1.500"/>
<path d="M1682.500,680H1696V692M1682.500,680V695H1690" stroke-width="1.300"/><path d="M1686,683H1692M1689,683V692" stroke-width="1.800"/><path d="M1693,690H1701M1697,686V695" stroke-width="1.600"/>
<g transform="translate(1422,722) scale(1.1)"><use href="#wandi"/></g>
<use href="#ar" x="1694" y="721"/>

<!-- red arrow -->
<path d="M1447,677L1650,609L1648,604L1669,608L1653,622L1652,616L1449,678.500Z" fill="#ed1c24" stroke="none"/>

<!-- status icons -->
<rect x="8.500" y="937.500" width="14" height="12" stroke-width="1" /><circle cx="15.500" cy="943.500" r="4" stroke-width="1" stroke-dasharray="1 1"/>
<path d="M1353,943H1371" stroke-width="1"/><circle cx="1353.500" cy="943" r="1.500" fill="#ddd" stroke="none"/><circle cx="1370" cy="943" r="1.500" fill="#ddd" stroke="none"/>
<path d="M1663,936H1678V948H1663ZM1670.500,948V953M1665,953H1676" stroke-width="1.100"/><rect x="1670" y="941" width="2" height="2" fill="#c8c8c8" stroke="none"/>
<g fill="#6a6a6a" stroke="none"><rect x="1702" y="951" width="2" height="2"/><rect x="1699" y="954" width="2" height="2"/><rect x="1702" y="954" width="2" height="2"/><rect x="1696" y="957" width="2" height="2"/><rect x="1699" y="957" width="2" height="2"/><rect x="1702" y="957" width="2" height="2"/></g>
</svg>
</div>
</body></html>
